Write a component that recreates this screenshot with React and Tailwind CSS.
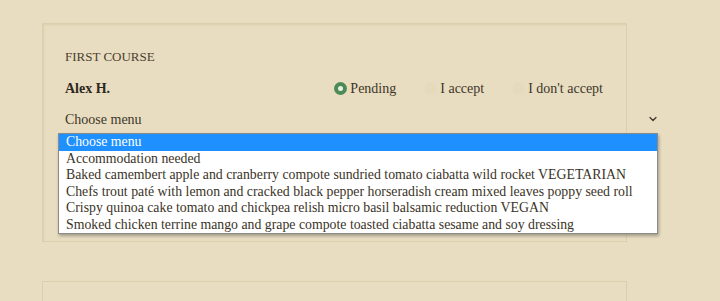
import { ChevronDown } from 'lucide-react';

const OPTIONS = [
  'Choose menu',
  'Accommodation needed',
  'Baked camembert apple and cranberry compote sundried tomato ciabatta wild rocket VEGETARIAN',
  'Chefs trout paté with lemon and cracked black pepper horseradish cream mixed leaves poppy seed roll',
  'Crispy quinoa cake tomato and chickpea relish micro basil balsamic reduction VEGAN',
  'Smoked chicken terrine mango and grape compote toasted ciabatta sesame and soy dressing',
];

const serif = { fontFamily: '"Liberation Serif", "DejaVu Serif", serif' };

function Radio({ checked, label }) {
  return (
    <label className="flex items-center gap-[3px]">
      <span
        className={`w-[13px] h-[13px] rounded-full flex items-center justify-center ${
          checked ? 'bg-[#4e8a58]' : 'bg-[#e6dabd]'
        }`}
      >
        {checked && <span className="w-[5px] h-[5px] rounded-full bg-[#e8f2e0]" />}
      </span>
      <span>{label}</span>
    </label>
  );
}

export default function App() {
  return (
    <div className="min-h-[301px] h-[301px] overflow-hidden bg-[#e8ddc0] text-[#3b3327]" style={serif}>
      <div className="pl-[42px] pt-[23px]">
        <div className="relative w-[585px] h-[219px] border border-[#dbcfae] shadow-[inset_1px_1px_2px_rgba(150,130,90,0.15)] pl-[22px] pt-[24px]">
          <div className="text-[13px] leading-[18px] text-[#4a4032]">FIRST COURSE</div>

          <div className="flex items-center mt-[13px] h-[18px] text-[14px]">
            <span className="font-bold text-[#2e281f]">Alex H.</span>
            <div className="ml-auto mr-[23px] flex items-center gap-[28px] text-[#3e362a]">
              <Radio checked label="Pending" />
              <Radio label="I accept" />
              <Radio label="I don't accept" />
            </div>
          </div>

          <div className="flex items-center mt-[13px] w-[594px] h-[18px] text-[14px] text-[#3e362a]">
            <span>Choose menu</span>
            <ChevronDown className="ml-auto w-[12px] h-[12px] text-[#3e362a]" strokeWidth={2.5} />
          </div>

          <div className="absolute left-[15px] top-[109px] w-[600px] bg-white border border-[#8a8a8a] shadow-[1px_2px_3px_rgba(0,0,0,0.3)] text-[13.8px] leading-[16.5px] text-[#3b3327]">
            {OPTIONS.map((o, i) => (
              <div
                key={o}
                className={`pl-[7px] whitespace-nowrap ${i === 0 ? 'bg-[#1e90ff] text-white' : ''}`}
              >
                {o}
              </div>
            ))}
          </div>
        </div>

        <div className="mt-[39px] w-[585px] h-[40px] border border-[#dbcfae]" />
      </div>
    </div>
  );
}
